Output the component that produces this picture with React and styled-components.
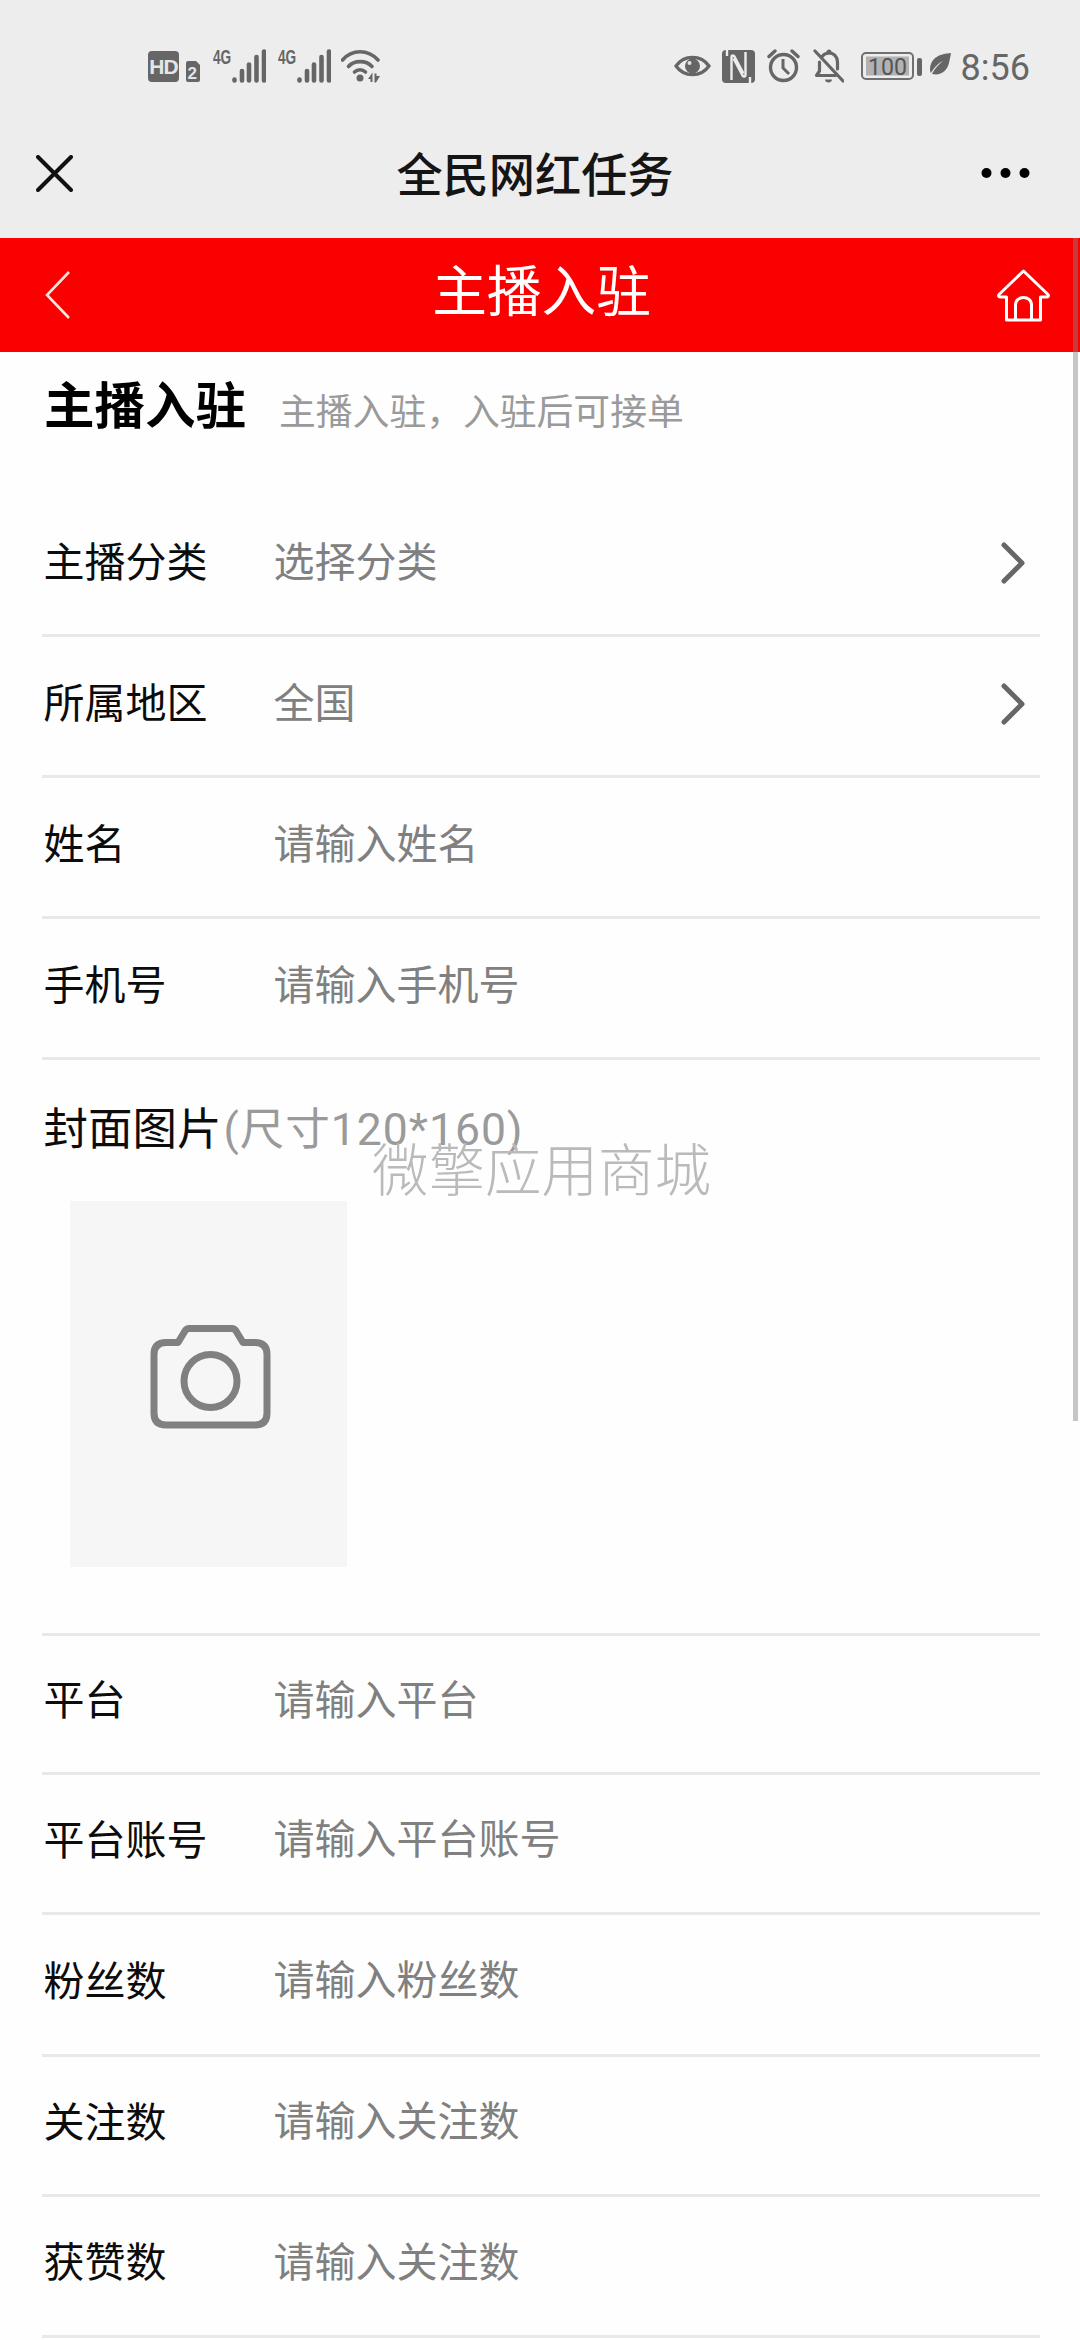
import React from 'react';
import styled, { createGlobalStyle } from 'styled-components';

const CJK = `Roboto, "Noto Sans CJK SC", "Noto Sans", sans-serif`;

const Global = createGlobalStyle`
  html, body { margin: 0; padding: 0; background: #fefefe; }
  * { box-sizing: border-box; }
`;

const Page = styled.div`
  position: relative;
  width: 1080px;
  height: 2340px;
  overflow: hidden;
  background: #fefefe;
  font-family: ${CJK};
`;

const Chrome = styled.header`
  background: #ededed;
  height: 238px;
`;

const StatusBar = styled.div`
  height: 100px;
  padding: 49px 50px 0 148px;
  display: flex;
  justify-content: space-between;
  align-items: flex-start;
`;

const StatusGroup = styled.div`
  display: flex;
  align-items: flex-start;
`;

const StatusIcon = styled.svg`
  display: block;
  height: 34px;
  margin-left: ${(p) => p.$gap || 0}px;
  flex: none;
`;

const TallIcon = styled(StatusIcon)`
  height: 40px;
  margin-top: -6px;
`;

const HdBadge = styled.span`
  width: 31px;
  height: 31px;
  margin-top: 2px;
  border-radius: 4px;
  background: #666;
  color: #e6e6e6;
  font-family: "Liberation Sans", sans-serif;
  font-weight: 700;
  font-size: 21px;
  letter-spacing: -1px;
  line-height: 31px;
  text-align: center;
  flex: none;
`;

const Clock = styled.span`
  margin-left: 10px;
  font-family: Roboto, sans-serif;
  font-size: 36px;
  line-height: 39px;
  color: #666;
`;

const NavBar = styled.div`
  height: 138px;
  padding: 8px 50px 0 40px;
  display: grid;
  grid-template-columns: 1fr auto 1fr;
  align-items: center;
`;

const NavTitle = styled.h1`
  margin: 0;
  font-size: 46.2px;
  font-weight: 500;
  line-height: 60px;
  padding-top: 6px;
  color: #151515;
`;

const NavEnd = styled.div`
  display: flex;
  justify-content: ${(p) => (p.$right ? 'flex-end' : 'flex-start')};
`;

const CloseWrap = styled.div`
  margin-left: -4px;
  display: flex;
`;

const RedBar = styled.div`
  height: 114px;
  background: #fa0000;
  padding: 0 30px 0 33px;
  display: grid;
  grid-template-columns: 1fr auto 1fr;
  align-items: center;
  color: #fff;
`;

const RedTitle = styled.h2`
  margin: 0;
  font-size: 54.7px;
  font-weight: 400;
  line-height: 70px;
  padding-bottom: 6px;
  color: #fff;
`;

const BackWrap = styled.div`
  padding-left: 12px;
  display: flex;
`;

const Intro = styled.div`
  height: 143.5px;
  padding: 22px 0 0 44px;
  display: flex;
  align-items: flex-start;
`;

const Heading = styled.h3`
  margin: 0;
  font-size: 50.5px;
  line-height: 66px;
  font-weight: 700;
  color: #000;
`;

const Sub = styled.span`
  margin-left: 33px;
  font-size: 36.8px;
  line-height: 66px;
  padding-top: 6px;
  color: #9a9a9a;
`;

const Form = styled.div`
  margin: 0 40px 0 42px;
`;

const Row = styled.div`
  height: ${(p) => p.$h || 141}px;
  border-bottom: 3px solid #e8e8e8;
  padding: 0 15px ${(p) => (p.$lift ? 6 : 3)}px 1.5px;
  display: flex;
  align-items: center;
`;

const Label = styled.span`
  width: 230px;
  flex: none;
  font-size: 41px;
  line-height: 54px;
  color: #0c0c0c;
  padding-top: ${(p) => p.$shift || 0}px;
`;

const Value = styled.span`
  font-size: 41px;
  line-height: 54px;
  color: #808080;
`;

const Chevron = styled.svg`
  display: block;
  margin-left: auto;
  width: 24px;
  height: 42px;
`;

const Cover = styled.div`
  height: 576px;
  border-bottom: 3px solid #e8e8e8;
  padding: 43px 0 0 1.5px;
`;

const CoverLabel = styled.div`
  font-size: 44.5px;
  line-height: 54px;
  color: #0c0c0c;
`;

const CoverHint = styled.span`
  color: #9a9a9a;
  letter-spacing: 1px;
  margin-left: 2px;
`;

const Upload = styled.div`
  margin: 44.5px 0 0 26.5px;
  width: 277px;
  height: 366px;
  background: #f6f6f6;
  display: flex;
  align-items: center;
  justify-content: center;
  padding: 0 0 14px 4px;
`;

const Watermark = styled.div`
  position: absolute;
  left: 372px;
  top: 1133px;
  font-size: 56.5px;
  line-height: 78px;
  font-weight: 300;
  color: #bababa;
  white-space: nowrap;
`;

const Scrollbar = styled.div`
  position: absolute;
  left: 1073px;
  top: 238px;
  width: 5px;
  height: 1183px;
  background: rgba(130, 130, 130, 0.45);
`;

const SignalIcon = ({ gap }) => (
  <TallIcon $gap={gap} viewBox="0 -6 53 40" width="53">
    <g transform="translate(0 14.5) scale(0.7 1)">
      <text x="0" y="0" fontFamily="'Liberation Sans'" fontWeight="700" fontSize="19.5" fill="#666">4G</text>
    </g>
    <g stroke="#666" strokeWidth="4.6" strokeLinecap="round">
      <path d="M21.5 30.5v1" />
      <path d="M29 22v9.5" />
      <path d="M36 15.5v16" />
      <path d="M43.5 8v23.5" />
      <path d="M51 2.5v29" />
    </g>
  </TallIcon>
);

const fields1 = [
  ['姓名', '请输入姓名'],
  ['手机号', '请输入手机号'],
];
const fields2 = [
  ['平台', '请输入平台', 139],
  ['平台账号', '请输入平台账号', 140],
  ['粉丝数', '请输入粉丝数', 142],
  ['关注数', '请输入关注数', 140],
  ['获赞数', '请输入关注数', 141],
];

const ChevronIcon = () => (
  <Chevron viewBox="0 0 24 42" fill="none" stroke="#666" strokeWidth="5" strokeLinecap="round" strokeLinejoin="round">
    <path d="M3 3l18 18L3 39" />
  </Chevron>
);

export default function App() {
  return (
    <Page>
      <Global />
      <Chrome>
        <StatusBar>
          <StatusGroup>
            <HdBadge>HD</HdBadge>
            <StatusIcon $gap={6} viewBox="0 0 15 34" width="15">
              <path d="M3 12h8l4 4v15a2 2 0 0 1-2 2H3a2 2 0 0 1-2-2V14a2 2 0 0 1 2-2z" fill="#666" />
              <text x="2.5" y="29.5" fontFamily="'Liberation Sans'" fontWeight="700" fontSize="17" fill="#e4e4e4">2</text>
            </StatusIcon>
            <SignalIcon gap={13} />
            <SignalIcon gap={12} />
            <StatusIcon $gap={10} viewBox="0 0 39 34" width="39">
              <g fill="none" stroke="#666" strokeWidth="3.6" strokeLinecap="round">
                <path d="M1.5 11C11 0 27 0 37 11" />
                <path d="M7.5 17.5C13 11 25 11 31 17.5" />
                <path d="M13.5 23c3-3 8-3 11 0" />
              </g>
              <circle cx="19" cy="29" r="3.5" fill="#666" />
              <path d="M27 30l4.5-6.5V33h-2v-3zM33.5 24.5h2V27H39l-4 6.5h-1.5z" fill="#666" />
            </StatusIcon>
          </StatusGroup>
          <StatusGroup>
            <StatusIcon viewBox="0 0 37 34" width="37">
              <path d="M2 17C10 5.5 27 5.5 35 17C27 28.5 10 28.5 2 17z" fill="none" stroke="#666" strokeWidth="3.2" />
              <circle cx="18.5" cy="17" r="7.5" fill="#666" />
              <circle cx="15.5" cy="14" r="2" fill="#e4e4e4" />
            </StatusIcon>
            <StatusIcon $gap={11} viewBox="0 0 33 34" width="33">
              <rect x="0" y="1" width="33" height="33" rx="4" fill="#666" />
              <g fill="none" stroke="#ededed" strokeWidth="2.4">
                <path d="M9.5 31V8c0-2 2-2 3-.5l9 17" />
                <path d="M23.5 3v23c0 2-2 2-3 .5l-9-17" />
                <path d="M5 1v6M28 28v6" />
              </g>
            </StatusIcon>
            <StatusIcon $gap={12} viewBox="0 0 33 34" width="33">
              <circle cx="16.5" cy="18.5" r="13" fill="none" stroke="#666" strokeWidth="3.4" />
              <path d="M16 10v9l6 6" fill="none" stroke="#666" strokeWidth="3" />
              <path d="M2 7.5L8 2M31 7.5L25 2" stroke="#666" strokeWidth="3.4" strokeLinecap="round" />
            </StatusIcon>
            <StatusIcon $gap={13} viewBox="0 0 31 34" width="31">
              <g fill="none" stroke="#666" strokeWidth="3.2" strokeLinecap="round" strokeLinejoin="round">
                <path d="M9 7.5C11 5 14 4 16 4c5 0 8.5 4 8.5 9v7M6.5 13v9l-3 4.5h19" />
                <path d="M2 2l28 30" />
              </g>
              <path d="M12 30.5h7c0 4-7 4-7 0z" fill="#666" />
              <circle cx="16" cy="3" r="2.5" fill="#666" />
            </StatusIcon>
            <StatusIcon $gap={17} viewBox="0 0 61 34" width="61">
              <rect x="1" y="4" width="51" height="26" rx="4" fill="none" stroke="#707070" strokeWidth="2" />
              <rect x="5" y="7.5" width="43" height="19" fill="#b2b2b2" />
              <text x="7" y="25.5" fontFamily="Roboto" fontSize="23" fill="#555" textLength="39" lengthAdjust="spacingAndGlyphs">100</text>
              <rect x="56" y="9" width="5" height="18" rx="2" fill="#666" />
            </StatusIcon>
            <StatusIcon $gap={6} viewBox="0 0 23 34" width="23">
              <path d="M23 4C12 5 3 8 2 20c0 2 .5 3 1 4 4-7 8-10 12-12-4 3-8 7-11 13 9 2 15-3 17-11 .7-3 1.5-7 2-10z" fill="#666" />
            </StatusIcon>
            <Clock>8:56</Clock>
          </StatusGroup>
        </StatusBar>
        <NavBar>
          <CloseWrap>
            <svg width="37" height="37" viewBox="0 0 37 37" fill="none" stroke="#111" strokeWidth="4" strokeLinecap="round">
              <path d="M2 2l33 33M35 2L2 35" />
            </svg>
          </CloseWrap>
          <NavTitle>全民网红任务</NavTitle>
          <NavEnd $right>
            <svg width="49" height="12" viewBox="0 0 49 12" fill="#000">
              <circle cx="5.5" cy="6" r="5" />
              <circle cx="24.5" cy="6" r="5" />
              <circle cx="43.5" cy="6" r="5" />
            </svg>
          </NavEnd>
        </NavBar>
      </Chrome>
      <RedBar>
        <BackWrap>
          <svg width="25" height="48" viewBox="0 0 25 48" fill="none" stroke="#ffe4dc" strokeWidth="2.6">
            <path d="M24 1L2 24l22 23" />
          </svg>
        </BackWrap>
        <RedTitle>主播入驻</RedTitle>
        <NavEnd $right>
          <svg width="53" height="53" viewBox="0 0 53 53" fill="none" stroke="#fff" strokeWidth="3" strokeLinejoin="round">
            <path d="M26.5 2L2 25.5c-1 1.5 0 2.5 1.5 2.5H9.5V51h34V28h6c1.5 0 2.5-1 1.5-2.5z" />
            <path d="M18.5 51V36c0-10 16-10 16 0v15" />
          </svg>
        </NavEnd>
      </RedBar>
      <Intro>
        <Heading>主播入驻</Heading>
        <Sub>主播入驻，入驻后可接单</Sub>
      </Intro>
      <Form>
        <Row>
          <Label>主播分类</Label>
          <Value>选择分类</Value>
          <ChevronIcon />
        </Row>
        <Row>
          <Label>所属地区</Label>
          <Value>全国</Value>
          <ChevronIcon />
        </Row>
        {fields1.map(([l, v]) => (
          <Row key={l}>
            <Label>{l}</Label>
            <Value>{v}</Value>
          </Row>
        ))}
        <Cover>
          <CoverLabel>
            封面图片<CoverHint>(尺寸120*160)</CoverHint>
          </CoverLabel>
          <Upload>
            <svg width="121" height="104" viewBox="0 0 121 104" fill="none" stroke="#808080" strokeWidth="7" strokeLinejoin="round">
              <path d="M16 17.5H28L35 6c1-1.5 2-2.5 4-2.5H82c2 0 3 1 4 2.5l7 11.500H105c8 0 12 4 12 12V88c0 8-4 12-12 12H16c-8 0-12-4-12-12V29.5c0-8 4-12 12-12z" />
              <circle cx="60.5" cy="56" r="26.5" />
            </svg>
          </Upload>
        </Cover>
        {fields2.map(([l, v, h]) => (
          <Row key={l} $h={h} $lift>
            <Label $shift={1}>{l}</Label>
            <Value>{v}</Value>
          </Row>
        ))}
      </Form>
      <Watermark>微擎应用商城</Watermark>
      <Scrollbar />
    </Page>
  );
}
